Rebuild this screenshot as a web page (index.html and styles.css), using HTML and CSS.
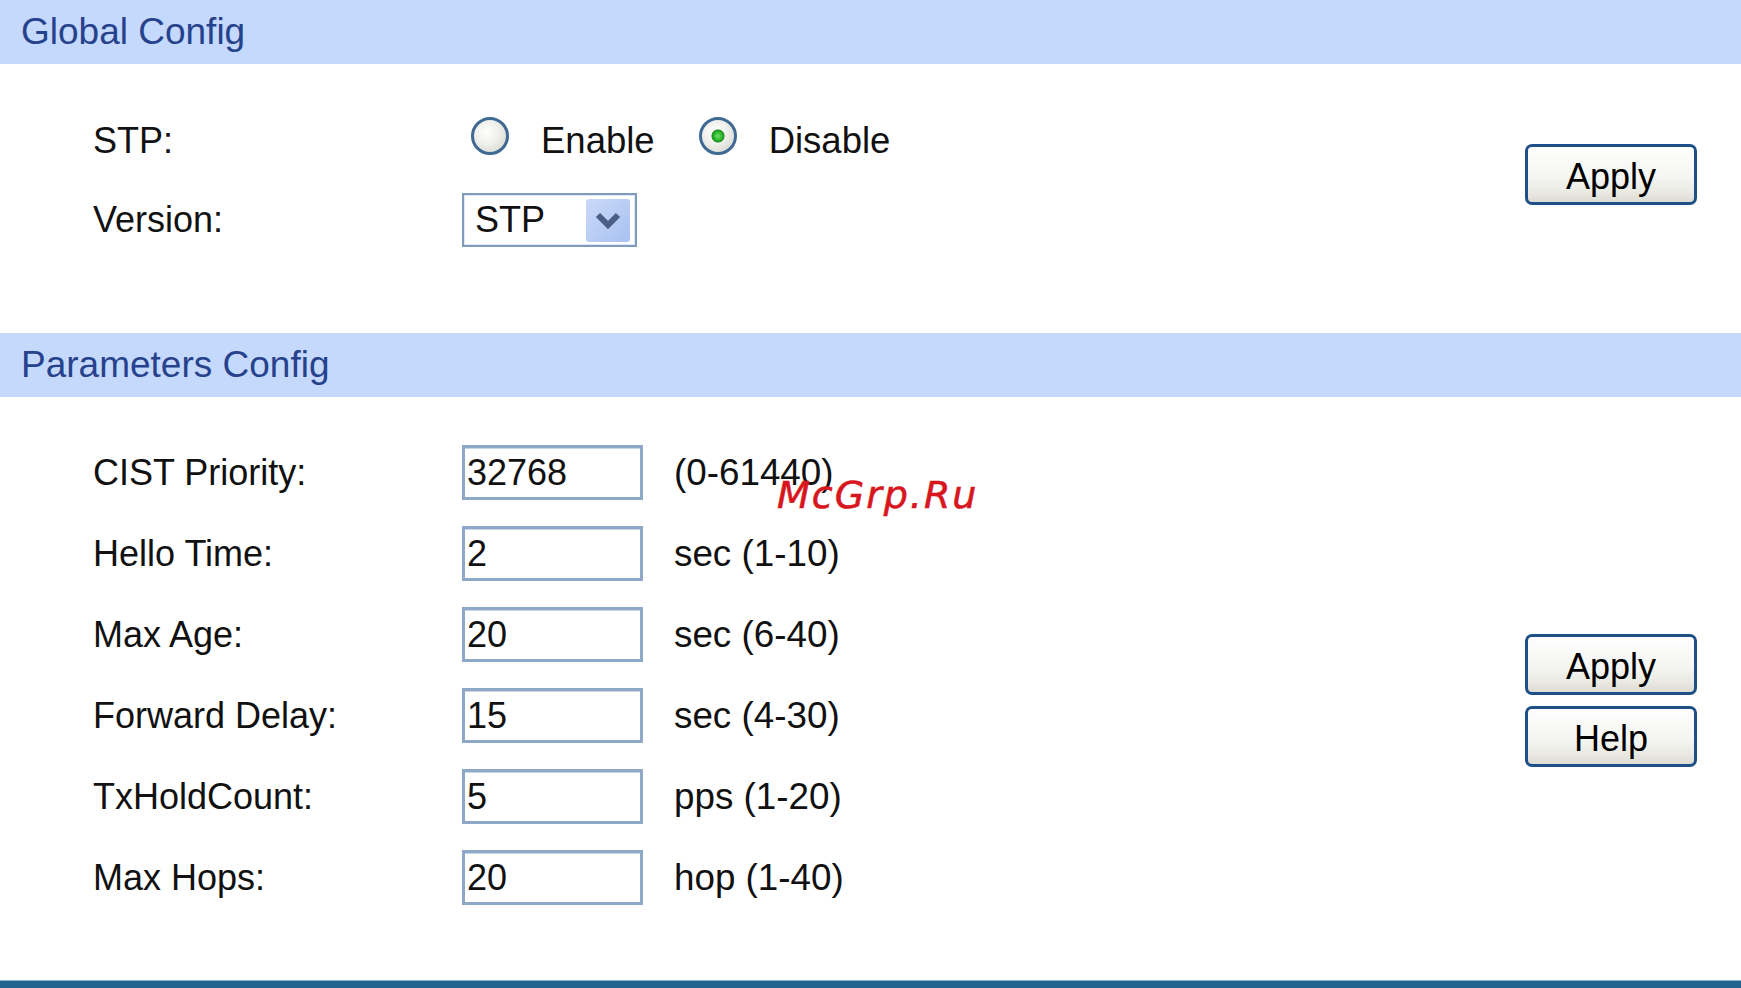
FILE: index.html
```html
<!DOCTYPE html>
<html lang="en">
<head>
<meta charset="utf-8">
<title>STP Config</title>
<link rel="stylesheet" href="styles.css">
</head>
<body>
<div class="page">
  <div class="section-head">Global Config</div>
  <div class="section section-global">
    <div class="form">
      <div class="row row-stp">
        <span class="label">STP:</span>
        <label class="opt opt-first"><input type="radio" name="stp" class="radio"><span>Enable</span></label>
        <label class="opt opt-next"><input type="radio" name="stp" class="radio" checked><span>Disable</span></label>
      </div>
      <div class="row row-ver">
        <span class="label">Version:</span>
        <div class="select">
          <span class="select-text">STP</span>
          <span class="select-arrow">
            <svg width="44" height="43" viewBox="0 0 44 43"><polyline points="12,16 22,26 32,16" fill="none" stroke="#4a5e86" stroke-width="6"/></svg>
          </span>
        </div>
      </div>
    </div>
    <div class="actions actions-global">
      <button class="btn">Apply</button>
    </div>
  </div>

  <div class="section-head">Parameters Config</div>
  <div class="section section-params">
    <div class="form form-params">
      <div class="row prow"><span class="label">CIST Priority:</span><input class="field" type="text" value="32768"><span class="unit">(0-61440)</span></div>
      <div class="row prow"><span class="label">Hello Time:</span><input class="field" type="text" value="2"><span class="unit">sec (1-10)</span></div>
      <div class="row prow"><span class="label">Max Age:</span><input class="field" type="text" value="20"><span class="unit">sec (6-40)</span></div>
      <div class="row prow"><span class="label">Forward Delay:</span><input class="field" type="text" value="15"><span class="unit">sec (4-30)</span></div>
      <div class="row prow"><span class="label">TxHoldCount:</span><input class="field" type="text" value="5"><span class="unit">pps (1-20)</span></div>
      <div class="row prow"><span class="label">Max Hops:</span><input class="field" type="text" value="20"><span class="unit">hop (1-40)</span></div>
    </div>
    <div class="actions actions-params">
      <button class="btn">Apply</button>
      <button class="btn">Help</button>
    </div>
    <div class="watermark">McGrp.Ru</div>
  </div>
  <div class="bottom-bar"></div>
</div>
</body>
</html>
```

FILE: styles.css
```css
html, body {
  margin: 0;
  padding: 0;
  background: #ffffff;
}

body {
  font-family: "Liberation Sans", Arial, sans-serif;
  font-size: 36px;
  color: #111111;
}

.page {
  width: 1741px;
  height: 988px;
  overflow: hidden;
  display: flex;
  flex-direction: column;
}

.section-head {
  height: 64px;
  line-height: 64px;
  background: #c5d9fc;
  color: #27428c;
  font-size: 37px;
  padding-left: 21px;
  box-sizing: border-box;
  flex: none;
}

.section {
  display: flex;
  flex: none;
  position: relative;
}

.section-global {
  height: 269px;
}

.section-params {
  height: 583px;
}

.form {
  flex: 1;
  padding-left: 93px;
  display: flex;
  flex-direction: column;
}

.section-global .form {
  padding-top: 47px;
  gap: 22px;
}

.form-params {
  padding-top: 48px;
  gap: 26px;
}

.row {
  display: flex;
  align-items: center;
}

.row-stp {
  height: 60px;
}

.row-ver {
  height: 54px;
}

.prow {
  height: 55px;
}

.label {
  width: 369px;
  flex: none;
}

.label-ver {
  margin-left: -3px;
}

.opt {
  display: flex;
  align-items: center;
  gap: 32px;
  font-size: 36.5px;
}

.opt-first {
  margin-left: 9px;
}

.opt-next {
  margin-left: 44px;
}

.radio {
  -webkit-appearance: none;
  appearance: none;
  width: 38px;
  height: 38px;
  margin: 0 0 11px 0;
  border-radius: 50%;
  border: 3px solid #3e6a94;
  box-sizing: border-box;
  background: radial-gradient(circle at 40% 38%, #ffffff 0, #eeeeea 45%, #d2d2cb 100%);
  flex: none;
}

.radio:checked {
  background:
    radial-gradient(circle at 50% 50%, #6fe06f 0, #2fb82f 4px, #1e8e1e 6px, rgba(0,0,0,0) 7px),
    radial-gradient(circle at 40% 38%, #ffffff 0, #eeeeea 45%, #d2d2cb 100%);
}

.select {
  width: 175px;
  height: 54px;
  box-sizing: border-box;
  border: 2px solid #7f9cbd;
  box-shadow: inset 0 0 0 1px #dfe8f3;
  display: flex;
  align-items: center;
  padding-left: 11px;
  background: #ffffff;
}

.select-text {
  color: #111111;
}

.select-arrow {
  margin-left: auto;
  margin-right: 5px;
  width: 44px;
  height: 43px;
  border-radius: 3px;
  background: linear-gradient(135deg, #cad9f8 0%, #b6cbf4 60%, #a8c2f2 100%);
  display: flex;
}

.field {
  width: 181px;
  height: 55px;
  box-sizing: border-box;
  border: 3px solid #8ea8c8;
  box-shadow: inset 0 1px 0 #c7d5e6;
  padding: 0 0 0 2px;
  margin: 0;
  font-family: "Liberation Sans", Arial, sans-serif;
  font-size: 36px;
  color: #111111;
  background: #ffffff;
  outline: none;
}

.unit {
  margin-left: 31px;
  font-size: 36.8px;
}

.actions {
  flex: none;
  width: 172px;
  margin-right: 44px;
  display: flex;
  flex-direction: column;
  gap: 11px;
}

.actions-global {
  padding-top: 80px;
}

.actions-params {
  padding-top: 237px;
}

.btn {
  width: 172px;
  height: 61px;
  box-sizing: border-box;
  border: 3px solid #1f4f87;
  border-radius: 7px;
  background: linear-gradient(to bottom, #fefefe 0%, #f5f5f2 55%, #ebebe4 80%, #dcdcd5 100%);
  font-family: "Liberation Sans", Arial, sans-serif;
  font-size: 36px;
  color: #000000;
  padding: 5px 0 0 0;
  margin: 0;
  cursor: pointer;
}

.watermark {
  position: absolute;
  left: 777px;
  top: 79px;
  font-family: "DejaVu Sans", Verdana, sans-serif;
  font-style: italic;
  font-size: 38px;
  line-height: 38px;
  letter-spacing: 2px;
  color: #d8161e;
  -webkit-text-stroke: 0.6px #d8161e;
}

.bottom-bar {
  height: 8px;
  box-sizing: border-box;
  border-top: 1px solid #8fb1cd;
  background: #22628f;
  flex: none;
}
```
